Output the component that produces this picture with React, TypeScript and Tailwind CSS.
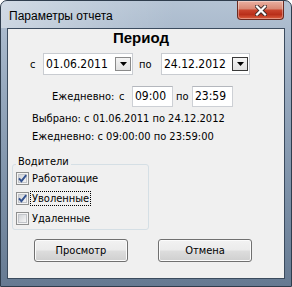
import * as React from 'react';

const ui =
  "font-['DejaVu_Sans_Condensed','DejaVu_Sans',sans-serif] font-stretch-condensed text-[11px] leading-[13px] text-black";

function DropButton({ dark }: { dark?: boolean }) {
  return (
    <div
      className={`ml-auto flex h-[14px] w-[16px] items-center justify-center border bg-[linear-gradient(to_bottom,#f4f4f4,#e1e1e1)] ${
        dark ? 'border-[#3a3a3a]' : 'border-[#8a8a8a]'
      }`}
    >
      <svg width="7" height="4" viewBox="0 0 7 4">
        <path d="M0 0h7L3.5 4z" fill="#000" />
      </svg>
    </div>
  );
}

function ComboBox({ value, className, dark }: { value: string; className: string; dark?: boolean }) {
  return (
    <div
      className={`flex h-[22px] items-center border border-[#c9ccd1] bg-white pl-[2px] pr-[1px] ${className}`}
    >
      <span className="text-[12px]">{value}</span>
      <DropButton dark={dark} />
    </div>
  );
}

function TimeEdit({ value }: { value: string }) {
  return (
    <div className="flex h-[21px] w-[41px] items-center border border-[#cdd0d5] border-t-[#b4b7bd] bg-white pl-[2px]">
      <span className="text-[12px]">{value}</span>
    </div>
  );
}

function CheckBox({ checked }: { checked?: boolean }) {
  return (
    <svg width="13" height="13" viewBox="0 0 13 13" className="shrink-0">
      <defs>
        <linearGradient id="cbfill" x1="0" y1="0" x2="1" y2="1">
          <stop offset="0" stopColor="#cfd2d6" />
          <stop offset="1" stopColor="#f7f7f7" />
        </linearGradient>
      </defs>
      <rect x="0.5" y="0.5" width="12" height="12" fill="#f4f4f4" stroke="#8e8f8f" />
      <rect x="2.5" y="2.5" width="8" height="8" fill="url(#cbfill)" stroke="#c2c5ca" />
      {checked && (
        <path d="M3 6.4 L5.4 9.2 L10.2 3.2" fill="none" stroke="#33528f" strokeWidth="1.9" />
      )}
    </svg>
  );
}

function Check({ label, checked, focused }: { label: string; checked?: boolean; focused?: boolean }) {
  return (
    <div className="flex h-[13px] items-center">
      <CheckBox checked={checked} />
      <span
        className={`ml-[1px] px-[1px] leading-[13px] border border-dotted ${
          focused ? 'border-black' : 'border-transparent'
        }`}
      >
        {label}
      </span>
    </div>
  );
}

function Button({ label }: { label: string }) {
  return (
    <button className="flex h-[23px] w-[94px] items-center justify-center rounded-[3px] border border-[#707070] bg-[linear-gradient(to_bottom,#f2f2f2_0%,#ebebeb_48%,#dddddd_52%,#cfcfcf_100%)] shadow-[inset_0_0_0_1px_#fbfbfb]">
      {label}
    </button>
  );
}

function CloseButton() {
  return (
    <div className="mr-[7px] flex h-[19px] w-[47px] items-center justify-center rounded-b-[4px] border border-t-0 border-[#6b2a20] bg-[linear-gradient(to_bottom,#eab0a1_0%,#da8a76_42%,#c8432c_52%,#b92f1a_75%,#dc5f3f_100%)] shadow-[inset_0_0_0_1px_rgba(255,255,255,0.35)]">
      <svg width="12" height="11" viewBox="0 0 12 11">
        <path d="M2 1.5 L10 9.5 M10 1.5 L2 9.5" stroke="#3b2a28" strokeWidth="4" strokeLinecap="square" />
        <path d="M2 1.5 L10 9.5 M10 1.5 L2 9.5" stroke="#ffffff" strokeWidth="2.2" strokeLinecap="square" />
      </svg>
    </div>
  );
}

export default function App() {
  return (
    <div className="h-[287px] w-[292px] bg-white">
      <div className="flex h-full w-full flex-col rounded-t-[7px] border border-[#2f3d4d] bg-[linear-gradient(to_bottom,#b4c3d4_0%,#98aabf_30%,#7a8ea5_70%,#667a92_100%)]">
        {/* title bar */}
        <div className="flex h-[27px] rounded-t-[6px] bg-[linear-gradient(to_right,rgba(255,255,255,0.4)_0%,rgba(255,255,255,0.15)_35%,rgba(255,255,255,0)_60%)]">
          <div className="pl-[8px] pt-[8px] font-['Liberation_Sans',sans-serif] text-[12px] leading-[14px] text-black">
            Параметры отчета
          </div>
          <div className="ml-auto">
            <CloseButton />
          </div>
        </div>

        {/* client area */}
        <div className={`mx-[6px] mb-[7px] flex flex-1 flex-col border border-[#3b4b5e] bg-[#f0f0f0] ${ui}`}>
          <div className="h-[18px] pl-[105px] font-['Liberation_Sans',sans-serif] text-[15px] font-bold leading-[18px]">
            Период
          </div>

          <div className="mt-[6px] flex items-center pl-[22px]">
            <span className="w-[13px]">с</span>
            <ComboBox value="01.06.2011" className="w-[90px]" />
            <span className="w-[28px] pl-[6px]">по</span>
            <ComboBox value="24.12.2012" className="w-[89px]" dark />
          </div>

          <div className="mt-[11px] flex items-center pl-[44px]">
            <span className="w-[67px]">Ежедневно:</span>
            <span className="w-[13px]">с</span>
            <TimeEdit value="09:00" />
            <span className="w-[19px] pl-[3px]">по</span>
            <TimeEdit value="23:59" />
          </div>

          <div className="mt-[3px] pl-[24px] leading-[18px]">
            <div>Выбрано: с 01.06.2011 по 24.12.2012</div>
            <div>Ежедневно: с 09:00:00 по 23:59:00</div>
          </div>

          <fieldset className="ml-[4px] mt-[9px] w-[137px] rounded-[3px] border border-[#d5dfe5] pb-[4px] pl-[3px]">
            <legend className="px-[2px] pb-[5px] leading-[13px]">Водители</legend>
            <div className="-mt-[1px] flex flex-col gap-[7px]">
              <Check label="Работающие" checked />
              <Check label="Уволенные" checked focused />
              <Check label="Удаленные" />
            </div>
          </fieldset>

          <div className="mt-[9px] flex gap-[30px] pl-[26px]">
            <Button label="Просмотр" />
            <Button label="Отмена" />
          </div>
        </div>
      </div>
    </div>
  );
}
